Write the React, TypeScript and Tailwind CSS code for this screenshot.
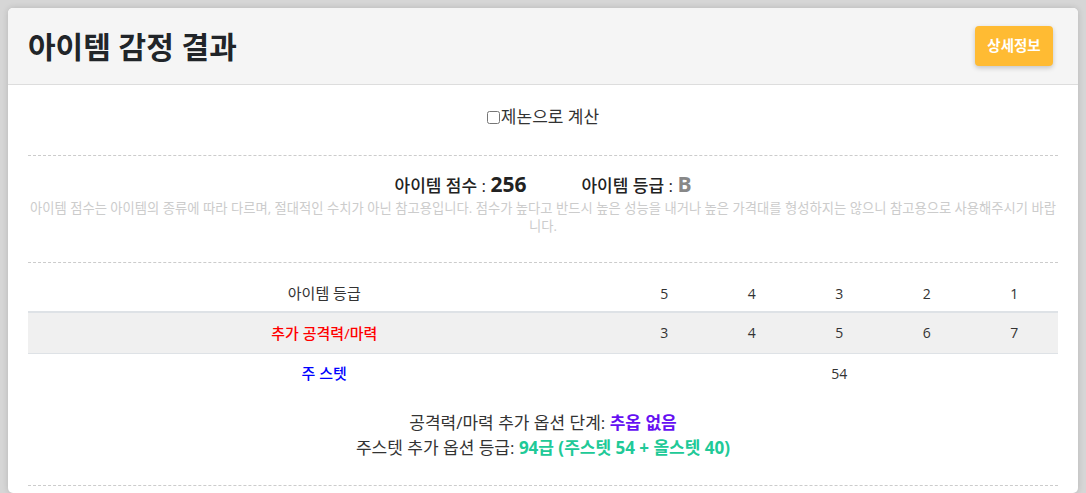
import { useState } from "react"

const grades = [5, 4, 3, 2, 1]
const attack = [3, 4, 5, 6, 7]

export default function App() {
    const [xenon, setXenon] = useState(false)

    return (
        <div className="min-h-screen bg-[#d6d6d6] p-2 font-['Open_Sans','Noto_Sans_CJK_KR',sans-serif] text-[#333]">
            <div className="bg-white rounded-[5px] shadow-[0_0_6px_rgba(0,0,0,0.15)] min-h-[485px]">

                {/* header */}
                <div className="flex justify-between items-center h-[77px] pl-5 pr-[25px] bg-[#f5f5f5] border-b border-[#ddd] rounded-t-[5px]">
                    <h1 className="text-[30px] font-bold text-[#212529]">
                        아이템 감정 결과
                    </h1>
                    <button className="w-[78px] h-10 rounded bg-[#ffbb33] text-white text-[14.5px] font-bold shadow-[0_2px_5px_rgba(0,0,0,0.2)]">
                        상세정보
                    </button>
                </div>

                <div className="px-5">

                    <div className="flex justify-center items-center pt-[21px] pb-[27px] text-[17px] leading-[22px]">
                        <label className="flex items-center">
                            <input
                                type="checkbox"
                                className="w-[13px] h-[13px] mr-[1px]"
                                checked={xenon}
                                onChange={() => setXenon(!xenon)}
                            />
                            제논으로 계산
                        </label>
                    </div>

                    <div className="border-t border-dashed border-[#ccc]" />

                    {/* score */}
                    <div className="pt-[15px] pb-[27px] text-center">
                        <div className="flex justify-center items-center gap-[55px] h-7">
                            <p className="text-[17px] font-medium text-[#222]">
                                아이템 점수 : <span className="text-[21px] font-bold">256</span>
                            </p>
                            <p className="text-[17px] font-medium text-[#222]">
                                아이템 등급 : <span className="text-[21px] font-bold text-[#888]">B</span>
                            </p>
                        </div>
                        <p className="text-[13.32px] leading-[18px] text-[#ccc]">
                            아이템 점수는 아이템의 종류에 따라 다르며, 절대적인 수치가 아닌 참고용입니다. 점수가 높다고 반드시 높은 성능을 내거나 높은 가격대를 형성하지는 않으니 참고용으로 사용해주시기 바랍니다.
                        </p>
                    </div>

                    <div className="border-t border-dashed border-[#ccc]" />

                    {/* table */}
                    <table className="w-full mt-3 text-[14px] text-center table-fixed">
                        <colgroup>
                            <col />
                            <col className="w-[87.5px]" />
                            <col className="w-[87.5px]" />
                            <col className="w-[87.5px]" />
                            <col className="w-[87.5px]" />
                            <col className="w-[87.5px]" />
                        </colgroup>
                        <tbody>
                            <tr className="h-[37px]">
                                <td className="text-[15px]">아이템 등급</td>
                                {grades.map(g => (
                                    <td key={g}>{g}</td>
                                ))}
                            </tr>
                            <tr className="h-[41px] bg-[#f0f0f0] border-t-2 border-b border-[#dee2e6]">
                                <td className="text-[15px] text-[#ff0000] font-medium">추가 공격력/마력</td>
                                {attack.map(a => (
                                    <td key={a}>{a}</td>
                                ))}
                            </tr>
                            <tr className="h-10">
                                <td className="text-[15px] text-[#0000ff] font-medium">주 스텟</td>
                                <td colSpan={5}>54</td>
                            </tr>
                        </tbody>
                    </table>

                    {/* summary */}
                    <div className="pt-[17px] pb-[25px] text-center text-[17px] leading-[25px]">
                        <p>
                            공격력/마력 추가 옵션 단계: <span className="font-bold text-[#6610f2]">추옵 없음</span>
                        </p>
                        <p>
                            주스텟 추가 옵션 등급: <span className="font-bold text-[#20c997]">94급 (주스텟 54 + 올스텟 40)</span>
                        </p>
                    </div>

                    <div className="border-t border-dashed border-[#ccc]" />
                </div>
            </div>
        </div>
    )
}
